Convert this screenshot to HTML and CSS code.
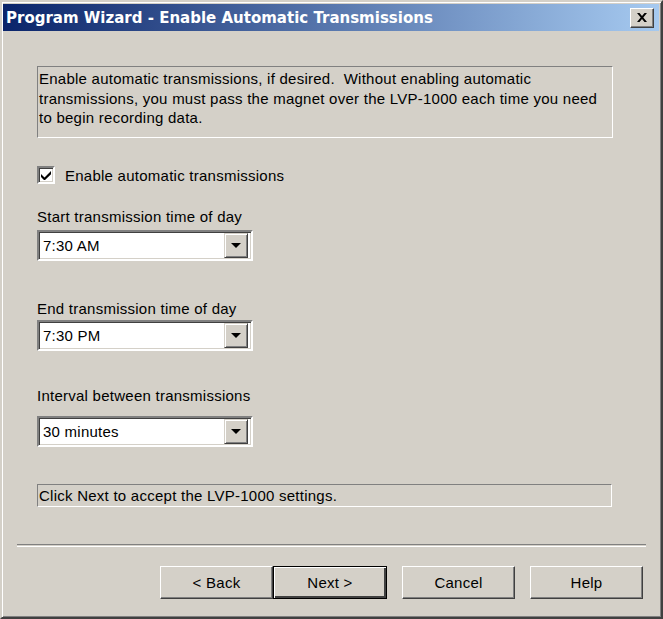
FILE: index.html
```html
<!DOCTYPE html>
<html>
  <head>
    <meta charset="UTF-8" />
    <title>Program Wizard - Enable Automatic Transmissions</title>
    <link rel="stylesheet" href="styles.css">
  </head>
  <body>
    <!--The dialog window with its title bar-->
    <div class="window">
      <div class="titlebar">
        <span class="title">Program Wizard - Enable Automatic Transmissions</span>
        <button class="close">
          <svg width="10" height="9" viewBox="0 0 10 9">
            <path d="M0 0h2.5L5 3 7.5 0H10L6.3 4.5 10 9H7.5L5 6 2.5 9H0l3.7-4.5z" fill="#000" />
          </svg>
        </button>
      </div>

      <!--The page body of the wizard-->
      <div class="content">
        <div class="infobox">
          Enable automatic transmissions, if desired.&nbsp; Without enabling automatic
          transmissions, you must pass the magnet over the LVP-1000 each time you need
          to begin recording data.
        </div>

        <label class="checkrow">
          <span class="checkbox">
            <svg width="10" height="10" viewBox="0 0 10 10">
              <path d="M0 4l3.5 3.5L10 1v3.2L3.5 10.5 0 7z" fill="#000" />
            </svg>
          </span>
          Enable automatic transmissions
        </label>

        <div class="label first">Start transmission time of day</div>
        <div class="select first">
          <span class="value">7:30 AM</span>
          <span class="drop"><span class="arrow"></span></span>
        </div>

        <div class="label second">End transmission time of day</div>
        <div class="select second">
          <span class="value">7:30 PM</span>
          <span class="drop"><span class="arrow"></span></span>
        </div>

        <div class="label third">Interval between transmissions</div>
        <div class="select third">
          <span class="value">30 minutes</span>
          <span class="drop"><span class="arrow"></span></span>
        </div>

        <div class="statusbox">Click Next to accept the LVP-1000 settings.</div>

        <div class="separator"></div>

        <!--The wizard buttons-->
        <div class="buttons">
          <button class="button">&lt; Back</button>
          <button class="button default">Next &gt;</button>
          <button class="button spaced">Cancel</button>
          <button class="button spaced">Help</button>
        </div>
      </div>
    </div>
  </body>
</html>
```

FILE: styles.css
```css
/* the whole page is the dialog window */
body {
  margin: 0;
  background: #d4d0c8;
  font-family: "Liberation Sans", Arial, sans-serif;
  font-size: 15px;
  letter-spacing: 0.25px;
  color: #000;
}

/* raised window frame */
.window {
  width: 663px;
  height: 619px;
  box-sizing: border-box;
  background: #d4d0c8;
  border: 2px solid;
  border-color: #d4d0c8 #404040 #404040 #d4d0c8;
  box-shadow: inset 1px 1px #fff, inset -1px -1px #808080;
  padding: 2px 2px 2px 1px;
  display: flex;
  flex-direction: column;
}

/* blue gradient title bar */
.titlebar {
  height: 27px;
  display: flex;
  align-items: center;
  padding: 0 5px 0 3px;
  background: linear-gradient(to right, #0a246a, #a6caf0);
}

.title {
  flex: 1;
  color: #fff;
  font-family: "DejaVu Sans", Verdana, sans-serif;
  font-weight: bold;
  font-size: 15px;
  letter-spacing: 0;
}

.close {
  width: 24px;
  height: 20px;
  padding: 0;
  margin: 0;
  display: flex;
  align-items: center;
  justify-content: center;
  background: #d4d0c8;
  border: 1px solid;
  border-color: #fff #404040 #404040 #fff;
  box-shadow: inset -1px -1px #808080;
}

.content {
  flex: 1;
  display: flex;
  flex-direction: column;
  align-items: flex-start;
  padding: 0 16px 0 34px;
}

/* sunken read-only text boxes */
.infobox,
.statusbox {
  box-sizing: border-box;
  width: 576px;
  border: 1px solid;
  border-color: #808080 #fff #fff #808080;
  padding: 2px 1px;
  line-height: 19.5px;
}

.infobox {
  margin-top: 35px;
  height: 72px;
}

.statusbox {
  margin-top: 37px;
  height: 23px;
  width: 575px;
  line-height: 19px;
  padding-top: 1px;
}

.checkrow {
  margin-top: 28px;
  height: 18px;
  display: flex;
  align-items: center;
  gap: 10px;
}

.checkbox {
  box-sizing: border-box;
  width: 18px;
  height: 18px;
  background: #fff;
  border: 2px solid;
  border-color: #808080 #fff #fff #808080;
  box-shadow: inset 1px 1px #404040, inset -1px -1px #d4d0c8;
  display: flex;
  align-items: center;
  justify-content: center;
}

.label {
  height: 18px;
  line-height: 18px;
}

.label.first {
  margin-top: 24px;
}

.label.second {
  margin-top: 39px;
}

.label.third {
  margin-top: 36px;
}

/* combo boxes */
.select {
  box-sizing: border-box;
  width: 216px;
  height: 31px;
  background: #fff;
  border: 2px solid;
  border-color: #808080 #fff #fff #808080;
  box-shadow: inset 1px 1px #404040, inset -1px -1px #d4d0c8;
  display: flex;
  align-items: center;
  padding: 1px 3px 2px 2px;
}

.select.first {
  margin-top: 4px;
}

.select.second {
  margin-top: 2px;
}

.select.third {
  margin-top: 11px;
}

.value {
  flex: 1;
  padding-left: 2px;
}

.drop {
  box-sizing: border-box;
  width: 24px;
  height: 25px;
  background: #d4d0c8;
  border: 1px solid;
  border-color: #d4d0c8 #404040 #404040 #d4d0c8;
  box-shadow: inset 1px 1px #fff, inset -1px -1px #808080;
  display: flex;
  align-items: center;
  justify-content: center;
}

.arrow {
  width: 0;
  height: 0;
  border-left: 5px solid transparent;
  border-right: 5px solid transparent;
  border-top: 5px solid #000;
  margin-top: 1px;
}

/* etched line above the buttons */
.separator {
  margin-top: 37px;
  margin-left: -20px;
  width: 629px;
  height: 1px;
  border-top: 1px solid #808080;
  border-bottom: 1px solid #fff;
}

.buttons {
  margin-top: 19px;
  align-self: stretch;
  display: flex;
  justify-content: flex-end;
}

.button {
  box-sizing: border-box;
  width: 113px;
  height: 33px;
  margin: 0;
  padding: 0;
  font-family: "Liberation Sans", Arial, sans-serif;
  font-size: 15px;
  letter-spacing: 0.25px;
  color: #000;
  background: #d4d0c8;
  border: 1px solid;
  border-color: #fff #404040 #404040 #fff;
  box-shadow: inset -1px -1px #808080;
}

.button.default {
  border: 1px solid #000;
  box-shadow: inset 1px 1px #fff, inset -2px -2px #404040;
  width: 114px;
}

.button.spaced {
  margin-left: 15px;
}
```
